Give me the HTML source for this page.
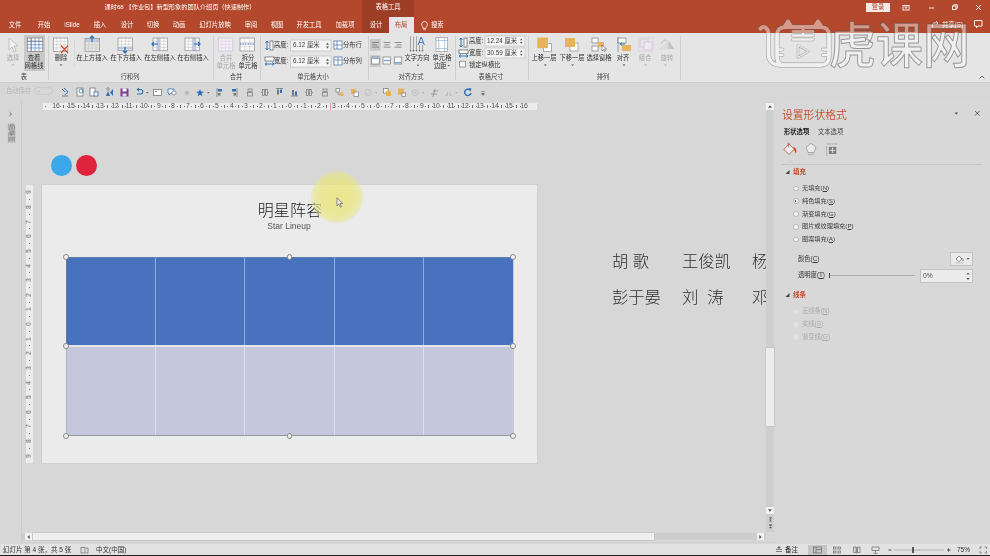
<!DOCTYPE html>
<html lang="zh"><head><meta charset="utf-8"><title>PowerPoint</title>
<style>
html,body{margin:0;padding:0}
body{width:990px;height:556px;overflow:hidden;position:relative;background:#d7d7d7;font-family:"Liberation Sans","Noto Sans CJK SC",sans-serif;color:#333;font-size:6.3px;line-height:1}
.a{position:absolute}
.t{position:absolute;white-space:nowrap;line-height:1}
.c{transform:translateX(-50%);text-align:center}
.w{color:#fff}
.t,.bl,.gl,svg{will-change:transform}
#top{left:0;top:0;width:990px;height:33px;background:#b4482d}
#ctx{left:362px;top:0;width:52px;height:33px;background:#9d3e27}
#tabact{left:389px;top:17px;width:25px;height:16px;background:#e5e5e5}
#rib{left:0;top:33px;width:990px;height:49px;background:#e5e5e5}
#qat{left:0;top:82px;width:990px;height:19px;background:#d7d7d7;border-top:1px solid #cdcdcd;box-sizing:border-box}
.sep{position:absolute;top:36px;width:1px;height:44px;background:#cfcfcf}
.gl{position:absolute;top:73.8px;font-size:6.3px;color:#444;white-space:nowrap;transform:translateX(-50%)}
.bl{position:absolute;font-size:6.3px;color:#333;white-space:nowrap;transform:translateX(-50%);text-align:center;line-height:7.8px}
.dis{color:#a8a8a8}
#status{left:0;top:544px;width:990px;height:12px;background:#e2e2e2}
#pane{left:777px;top:101px;width:213px;height:443px;background:#d8d8d8}
.ro{position:absolute;width:5.500px;height:5.500px;border:.8px solid #b4b4b4;border-radius:50%;background:#f4f4f4;box-sizing:border-box}
.h{position:absolute;width:5.800px;height:5.800px;border:.9px solid #858585;border-radius:50%;background:#f1f1ef;box-sizing:border-box}
</style></head><body>

<div class="a" id="top"></div><div class="a" id="ctx"></div><div class="a" id="tabact"></div>
<div class="t w c" style="left:179.500px;top:4px;font-size:6.200px">课时68 【作业包】新型形象的团队介绍页（快速制作）</div>
<div class="t w c" style="left:388px;top:4px;font-size:6.3px">表格工具</div>
<div class="t w c" style="left:14.7px;top:21.5px;font-size:6.3px">文件</div>
<div class="t w c" style="left:43.7px;top:21.5px;font-size:6.3px">开始</div>
<div class="t w c" style="left:71.7px;top:21.5px;font-size:6.3px">iSlide</div>
<div class="t w c" style="left:99.7px;top:21.5px;font-size:6.3px">插入</div>
<div class="t w c" style="left:126.7px;top:21.5px;font-size:6.3px">设计</div>
<div class="t w c" style="left:152.7px;top:21.5px;font-size:6.3px">切换</div>
<div class="t w c" style="left:178.7px;top:21.5px;font-size:6.3px">动画</div>
<div class="t w c" style="left:214.7px;top:21.5px;font-size:6.3px">幻灯片放映</div>
<div class="t w c" style="left:250.7px;top:21.5px;font-size:6.3px">审阅</div>
<div class="t w c" style="left:276.7px;top:21.5px;font-size:6.3px">视图</div>
<div class="t w c" style="left:308.7px;top:21.5px;font-size:6.3px">开发工具</div>
<div class="t w c" style="left:344.7px;top:21.5px;font-size:6.3px">加载项</div>
<div class="t w c" style="left:375.7px;top:21.5px;font-size:6.3px">设计</div>
<div class="t c" style="left:401.300px;top:21.500px;font-size:6.3px;color:#b4482d">布局</div>
<div class="t w" style="left:430.500px;top:21.500px;font-size:6.3px">搜索</div>
<svg class="a" style="left:420.300px;top:19.500px" width="9" height="12" viewBox="0 0 9 12"><path d="M4.500 1.500a2.900 2.900 0 0 0-1.600 5.300l.3 1.700h2.600l.3-1.700a2.900 2.900 0 0 0-1.600-5.300zM3.400 9.800h2.200" fill="none" stroke="#fff" stroke-width="0.8"/></svg>
<div class="a" style="left:866px;top:3px;width:24px;height:9px;background:#f3ebe8"></div><div class="t c" style="left:878px;top:4px;font-size:6.3px;color:#b4482d">登录</div>
<svg class="a" style="left:896px;top:0" width="94" height="33" viewBox="0 0 94 33"><g fill="none" stroke="#fff" stroke-width="0.9"><rect x="7" y="5.5" width="6" height="4.5"/><path d="M8.5 7h3M10 7v2"/><path d="M33 8h5"/><rect x="56.500" y="6" width="3.500" height="3.500"/><path d="M57.800 6v-1.200h3.500v3.500h-1.300"/><path d="M80 5l5 5M85 5l-5 5"/><path d="M78.500 20.500h7.500v5.500h-4l-1.500 1.800v-1.800h-2z"/><path d="M36.500 27.500v-2.500c0-1.200 1-2 2-2h2M40 24.700l2-1.700-2-1.700" transform="translate(0 0)"/><path d="M35.500 24.500v3.500h6" opacity=".0"/></g></svg>
<div class="t w" style="left:942px;top:21.500px;font-size:6.3px">共享(S)</div>
<div class="a" id="rib"></div><div class="a" id="qat"></div>
<div class="a" style="left:24px;top:35px;width:21px;height:36px;background:#c9c9c9"></div>
<div class="a" style="left:73.500px;top:39px;width:1px;height:27px;background:#d6d6d6"></div>
<div class="sep" style="left:47.5px"></div>
<div class="sep" style="left:213px"></div>
<div class="sep" style="left:260px"></div>
<div class="sep" style="left:367.5px"></div>
<div class="sep" style="left:455px"></div>
<div class="sep" style="left:528px"></div>
<div class="sep" style="left:680px"></div>
<div class="gl" style="left:24px">表</div>
<div class="gl" style="left:130px">行和列</div>
<div class="gl" style="left:236px">合并</div>
<div class="gl" style="left:313px">单元格大小</div>
<div class="gl" style="left:411px">对齐方式</div>
<div class="gl" style="left:491.3px">表格尺寸</div>
<div class="gl" style="left:603px">排列</div>
<div class="bl dis" style="left:13px;top:54px">选择</div>
<div class="bl" style="left:34px;top:54px">查看<br>网格线</div>
<div class="bl" style="left:61px;top:54px">删除</div>
<div class="bl" style="left:92px;top:54px">在上方插入</div>
<div class="bl" style="left:126px;top:54px">在下方插入</div>
<div class="bl" style="left:160px;top:54px">在左侧插入</div>
<div class="bl" style="left:193px;top:54px">在右侧插入</div>
<div class="bl dis" style="left:225.7px;top:54px">合并<br>单元格</div>
<div class="bl" style="left:247.5px;top:54px">拆分<br>单元格</div>
<div class="bl" style="left:417px;top:54px">文字方向</div>
<div class="bl" style="left:441.5px;top:54px">单元格<br>边距&nbsp;&nbsp;</div>
<div class="bl" style="left:544px;top:54px">上移一层</div>
<div class="bl" style="left:571.5px;top:54px">下移一层</div>
<div class="bl" style="left:599px;top:54px">选择窗格</div>
<div class="bl" style="left:623px;top:54px">对齐</div>
<div class="bl dis" style="left:645px;top:54px">组合</div>
<div class="bl dis" style="left:666.5px;top:54px">旋转</div><svg class="a" style="left:0;top:33px" width="700" height="49" viewBox="0 0 700 49">
<path d="M9 5l0 12 3-3 2 5 2-1-2-5h4z" fill="#f2f2f2" stroke="#b5b5b5" stroke-width="0.8"/>
<rect x="27.3" y="5" width="15.5" height="13.3" fill="#fff" stroke="#777" stroke-width="0.7"/><path d="M31.18 5v13.3M27.3 8.32h15.5M35.05 5v13.3M27.3 11.65h15.5M38.92 5v13.3M27.3 14.98h15.5" stroke="#5f90d6" stroke-width="0.8" fill="none"/>
<path d="M27.300 8.300h15.500M31.200 5v13.300" stroke="#777" stroke-width="0.7" fill="none"/>
<rect x="53.3" y="5" width="14.5" height="13.3" fill="#fbfbfb" stroke="#8c8c8c" stroke-width="0.7"/><path d="M56.92 5v13.3M53.3 8.32h14.5M60.55 5v13.3M53.3 11.65h14.5M64.17 5v13.3M53.3 14.98h14.5" stroke="#c4c4c4" stroke-width="0.55" fill="none"/>
<path d="M61 12.500l7 7.500M68 12.500l-7 7.500" stroke="#d8472b" stroke-width="1.200"/>
<rect x="85" y="5.600" width="14.500" height="3.300" fill="#b9cbe6"/>
<rect x="85" y="5.6" width="14.5" height="12.7" fill="none" stroke="#8c8c8c" stroke-width="0.7"/><path d="M88.62 5.6v12.7M85 8.77h14.5M92.25 5.6v12.7M85 11.95h14.5M95.88 5.6v12.7M85 15.12h14.5" stroke="#c4c4c4" stroke-width="0.55" fill="none"/>
<rect x="85" y="6" width="0" height="0" fill="#b9cbe6"/><path d="M92 9V3M90 5l2-2 2 2" stroke="#2e6fb5" stroke-width="1.2" fill="none"/>
<rect x="118" y="5" width="14.500" height="12.700" fill="#fbfbfb"/><rect x="118" y="13.500" width="14.500" height="3" fill="#b9cbe6"/>
<rect x="118" y="5" width="14.5" height="12.7" fill="none" stroke="#8c8c8c" stroke-width="0.7"/><path d="M121.62 5v12.7M118 8.18h14.5M125.25 5v12.7M118 11.35h14.5M128.88 5v12.7M118 14.52h14.5" stroke="#c4c4c4" stroke-width="0.55" fill="none"/>
<rect x="118" y="13" width="0" height="0" fill="#b9cbe6"/><path d="M125 14v6M123 18l2 2 2-2" stroke="#2e6fb5" stroke-width="1.2" fill="none"/>
<rect x="153" y="5" width="14.500" height="12.700" fill="#fbfbfb"/><rect x="156.600" y="5" width="3.700" height="12.700" fill="#b9cbe6"/>
<rect x="153" y="5" width="14.5" height="12.7" fill="none" stroke="#8c8c8c" stroke-width="0.7"/><path d="M156.62 5v12.7M153 8.18h14.5M160.25 5v12.7M153 11.35h14.5M163.88 5v12.7M153 14.52h14.5" stroke="#c4c4c4" stroke-width="0.55" fill="none"/>
<rect x="153" y="5" width="0" height="0" fill="#b9cbe6"/><path d="M158 11h-6M154 9l-2 2 2 2" stroke="#2e6fb5" stroke-width="1.2" fill="none"/>
<rect x="185" y="5" width="14.500" height="12.700" fill="#fbfbfb"/><rect x="192.300" y="5" width="3.700" height="12.700" fill="#b9cbe6"/>
<rect x="185" y="5" width="14.5" height="12.7" fill="none" stroke="#8c8c8c" stroke-width="0.7"/><path d="M188.62 5v12.7M185 8.18h14.5M192.25 5v12.7M185 11.35h14.5M195.88 5v12.7M185 14.52h14.5" stroke="#c4c4c4" stroke-width="0.55" fill="none"/>
<rect x="194.500" y="5" width="0" height="0" fill="#b9cbe6"/><path d="M194 11h6M198 9l2 2-2 2" stroke="#2e6fb5" stroke-width="1.2" fill="none"/>
<rect x="218.3" y="5" width="14.5" height="13" fill="#f3eef5" stroke="#cdbdd4" stroke-width="0.7"/><path d="M221.93 5v13M218.3 8.25h14.5M225.55 5v13M218.3 11.50h14.5M229.18 5v13M218.3 14.75h14.5" stroke="#dccfe2" stroke-width="0.55" fill="none"/>
<rect x="240" y="5" width="14.5" height="13" fill="#fbfbfb" stroke="#8c8c8c" stroke-width="0.7"/><path d="M244.83 5v13M240 9.33h14.5M249.67 5v13M240 13.67h14.5" stroke="#c4c4c4" stroke-width="0.55" fill="none"/>
<path d="M240 11h14" stroke="#2e6fb5" stroke-width="1.2" stroke-dasharray="1.500 1"/>
<path d="M267 8v9M265.500 10l1.500-2 1.500 2M265.500 15l1.500 2 1.500-2" stroke="#2e6fb5" stroke-width="0.9" fill="none"/><rect x="270" y="8" width="3" height="9" fill="#fff" stroke="#6e6e6e" stroke-width="0.8"/>
<rect x="265" y="24" width="9" height="4" fill="#fff" stroke="#6e6e6e" stroke-width="0.8"/><path d="M265 31h9M267 29.500l-2 1.500 2 1.500M272 29.500l2 1.500-2 1.500" stroke="#2e6fb5" stroke-width="0.9" fill="none"/>
<rect x="290.5" y="7" width="40.500" height="11" fill="#f5f5f5" stroke="#c6c6c6" stroke-width="0.8"/><path d="M326 11.7l1.500-2 1.500 2zM326 13.5l1.500 2 1.500-2z" fill="#555"/>
<rect x="290.5" y="23" width="40.500" height="11" fill="#f5f5f5" stroke="#c6c6c6" stroke-width="0.8"/><path d="M326 27.7l1.500-2 1.500 2zM326 29.5l1.500 2 1.500-2z" fill="#555"/>
<rect x="334" y="8" width="8" height="8" fill="#fff" stroke="#5b7fb5" stroke-width="0.8"/><path d="M334 12h8M337 8v8" stroke="#5b7fb5" stroke-width="0.8"/>
<rect x="334" y="24" width="8" height="8" fill="#fff" stroke="#5b7fb5" stroke-width="0.8"/><path d="M334 27h8M338 24v8" stroke="#5b7fb5" stroke-width="0.8"/>
<rect x="370" y="6" width="10.700" height="11.700" fill="#c8c8c8"/>
<path d="M372 9.500h7M372 11.800h5M372 14.100h7" stroke="#777" stroke-width="0.8"/>
<path d="M383.5 9.500h7M384.5 11.800h5M383.5 14.100h7" stroke="#777" stroke-width="0.8"/>
<path d="M394.5 9.500h7M396.5 11.800h5M394.5 14.100h7" stroke="#777" stroke-width="0.8"/>
<rect x="370" y="22.200" width="10.700" height="11.700" fill="#c8c8c8"/>
<rect x="371.7" y="24" width="7.500" height="7" fill="#fff" stroke="#777" stroke-width="0.7"/><path d="M372.3 25.3h6.300" stroke="#7fa6d9" stroke-width="1.600"/>
<rect x="383" y="24" width="7.500" height="7" fill="#fff" stroke="#777" stroke-width="0.7"/><path d="M383.6 27.5h6.300" stroke="#7fa6d9" stroke-width="1.600"/>
<rect x="394.3" y="24" width="7.500" height="7" fill="#fff" stroke="#777" stroke-width="0.7"/><path d="M394.90000000000003 29.700000000000003h6.300" stroke="#7fa6d9" stroke-width="1.600"/>
<path d="M410.500 3.500v15M413.500 3.500v15M416.500 3.500v15M419.500 12v6.500M422.500 12v6.500" stroke="#8a8a8a" stroke-width="0.7" fill="none"/>
<path d="M409.500 17l1 1.800 1-1.800zM412.500 17l1 1.800 1-1.800zM415.500 17l1 1.800 1-1.800zM418.500 17l1 1.800 1-1.800zM421.500 17l1 1.800 1-1.800z" fill="#666"/>
<text x="417.500" y="11.600" font-size="11" font-family="Liberation Sans,sans-serif" fill="#4a7fc0">A</text>
<path d="M416.700 31.700l1.300 1.500 1.300-1.500z" fill="#555"/>
<rect x="436" y="4.500" width="11.500" height="14" fill="#fff" stroke="#9a9a9a" stroke-width="0.7"/><path d="M438.800 4.500v14M444.700 4.500v14M436 7.500h11.500M436 15.500h11.500" stroke="#8fb4e0" stroke-width="0.7"/>
<path d="M447.500 32l1.200 1.400 1.200-1.400z" fill="#555"/>
<path d="M461 5v9M459.500 7l1.500-2 1.500 2M459.500 12l1.500 2 1.500-2" stroke="#2e6fb5" stroke-width="0.9" fill="none"/><rect x="464" y="5" width="3" height="9" fill="#fff" stroke="#6e6e6e" stroke-width="0.8"/>
<rect x="459" y="17" width="9" height="3.500" fill="#fff" stroke="#6e6e6e" stroke-width="0.8"/><path d="M459 23h9M461 21.500l-2 1.500 2 1.500M466 21.500l2 1.500-2 1.500" stroke="#2e6fb5" stroke-width="0.9" fill="none"/>
<rect x="485" y="3" width="40" height="10" fill="#f5f5f5" stroke="#c6c6c6" stroke-width="0.8"/><path d="M520 7.3l1.300-1.800 1.300 1.800zM520 9l1.300 1.800 1.300-1.800z" fill="#555"/>
<rect x="485" y="15" width="40" height="10" fill="#f5f5f5" stroke="#c6c6c6" stroke-width="0.8"/><path d="M520 19.3l1.300-1.800 1.300 1.800zM520 21l1.300 1.800 1.300-1.800z" fill="#555"/>
<rect x="459.700" y="28.200" width="5.800" height="5.800" fill="#f6f6f6" stroke="#777" stroke-width="0.7"/>
<rect x="543.500" y="10.500" width="8" height="8" fill="#fff" stroke="#9a9a9a" stroke-width="0.8"/><rect x="537.300" y="4.500" width="10.700" height="10.700" fill="#e8b45b"/>
<rect x="570" y="10" width="8" height="8" fill="#fff" stroke="#9a9a9a" stroke-width="0.8"/><rect x="565" y="5" width="10" height="9" fill="#e8b45b"/>
<rect x="592" y="5" width="6" height="5" fill="#fff" stroke="#8a8a8a" stroke-width="0.8"/><rect x="592" y="13" width="6" height="5" fill="#fff" stroke="#8a8a8a" stroke-width="0.8"/><rect x="598" y="9" width="6" height="5" fill="#e8b45b"/><path d="M602 12v6l1.500-1.500 1 2 1-.5-1-2h2z" fill="#fff" stroke="#555" stroke-width="0.6"/>
<rect x="618" y="5" width="8" height="5" fill="#fff" stroke="#8a8a8a" stroke-width="0.8"/><rect x="622" y="12" width="9" height="6" fill="#e8b45b"/><path d="M618 4v15" stroke="#8a8a8a" stroke-width="0.8"/><path d="M625 11h-5M622 9.500l-2 1.500 2 1.500" stroke="#2e6fb5" stroke-width="0.9" fill="none"/>
<g stroke="#d3c3d8" fill="none" stroke-width="0.8"><rect x="640" y="6" width="8" height="8"/><rect x="644" y="9" width="8" height="8" fill="#efe8f1"/><rect x="638.500" y="4.500" width="15" height="14" stroke-dasharray="1 1"/></g>
<path d="M668.300 6.900l6.100 9.200h-6.100z" fill="#c4c4c4"/><path d="M659.700 16.100l8-7.800v7.800z" fill="#dedede" stroke="#cfcfcf" stroke-width="0.5"/><path d="M661.600 11c.5-2.200 2-3.600 4-3.900M664.600 5.800l1.600 1.200-1.300 1.500" stroke="#bdbdbd" fill="none" stroke-width="0.9"/>
<path d="M11.5 31.500l1.500 1.500 1.500-1.500z" fill="#aaa"/>
<path d="M59.5 31.500l1.500 1.500 1.500-1.500z" fill="#555"/>
<path d="M543.8 31.500l1.500 1.500 1.500-1.500z" fill="#555"/>
<path d="M571.0 31.500l1.500 1.500 1.500-1.500z" fill="#555"/>
<path d="M622.5 31.500l1.500 1.500 1.500-1.500z" fill="#555"/>
<path d="M644.0 31.500l1.500 1.500 1.500-1.500z" fill="#aaa"/>
<path d="M664.0 31.500l1.500 1.500 1.500-1.500z" fill="#aaa"/>
</svg>
<div class="t" style="left:274px;top:42px;font-size:6.3px;color:#333">高度:</div>
<div class="t" style="left:274px;top:58px;font-size:6.3px;color:#333">宽度:</div>
<div class="t" style="left:343px;top:42px;font-size:6.3px;color:#333">分布行</div>
<div class="t" style="left:343px;top:58px;font-size:6.3px;color:#333">分布列</div>
<div class="t" style="left:469px;top:37.5px;font-size:6.3px;color:#333">高度:</div>
<div class="t" style="left:469px;top:49.5px;font-size:6.3px;color:#333">宽度:</div>
<div class="t" style="left:468.5px;top:61.8px;font-size:6.3px;color:#333">锁定纵横比</div>
<div class="t" style="left:293px;top:42px;font-size:6.3px;color:#444">6.12 厘米</div>
<div class="t" style="left:293px;top:58px;font-size:6.3px;color:#444">6.12 厘米</div>
<div class="t" style="left:487px;top:37.5px;font-size:6.3px;color:#444">12.24 厘米</div>
<div class="t" style="left:487px;top:49.5px;font-size:6.3px;color:#444">30.59 厘米</div>
<svg class="a" style="left:978px;top:74px" width="8" height="6"><path d="M1.500 4.500l2.500-2.500 2.500 2.500" stroke="#555" fill="none" stroke-width="0.9"/></svg><div class="t" style="left:5.500px;top:88px;font-size:6.3px;color:#b8b8b8">自动保存</div>
<div class="a" style="left:33.500px;top:87px;width:19px;height:8px;border:1px solid #cbcbcb;border-radius:4px;box-sizing:border-box"></div><div class="a" style="left:36.500px;top:89.500px;width:3px;height:3px;border-radius:50%;background:#cbcbcb"></div>
<svg class="a" style="left:55px;top:82.800px" width="440" height="19" viewBox="55 0 440 19">
<path d="M62 6l3 3M64 5l4 4-3 3" stroke="#2e6fb5" stroke-width="1" fill="none"/><path d="M62 13h6" stroke="#777" stroke-width="1"/>
<rect x="77" y="5" width="6" height="8" fill="#fff" stroke="#777" stroke-width="0.8"/><circle cx="81" cy="8" r="2" fill="none" stroke="#2e6fb5" stroke-width="0.8"/>
<rect x="90" y="5" width="5" height="8" fill="#fff" stroke="#777" stroke-width="0.8"/><rect x="94" y="9" width="4" height="4" fill="#fff" stroke="#2e6fb5" stroke-width="0.8"/>
<path d="M106 13l2-5 2 5zM113 6v7l-3-3.500z" fill="#2e6fb5"/><circle cx="108" cy="6" r="1.300" fill="none" stroke="#777" stroke-width="0.7"/>
<rect x="120.500" y="5.500" width="8" height="8" fill="#7a3f98"/><rect x="122.500" y="5.500" width="4" height="3" fill="#fff"/><rect x="122.500" y="10.500" width="4" height="3" fill="#e6dcee"/>
<path d="M137 11h4a2.300 2.300 0 0 0 0-4.500h-3" stroke="#2e6fb5" stroke-width="1.200" fill="none"/><path d="M139 4.500l-2.500 2 2.500 2z" fill="#2e6fb5"/><path d="M146 9l1.300 1.500 1.300-1.500z" fill="#666"/>
<rect x="153.500" y="6.500" width="8" height="6" fill="#fff" stroke="#777" stroke-width="0.8"/><path d="M155 8.500h2" stroke="#2e6fb5" stroke-width="0.8"/>
<path d="M168 6h6v4h-3l-2 2v-2h-1z" fill="#fff" stroke="#2e6fb5" stroke-width="0.8"/><circle cx="174" cy="10" r="2" fill="#fff" stroke="#777" stroke-width="0.7"/>
<polygon points="187.0,6.5 187.9,8.8 190.3,8.9 188.4,10.5 189.1,12.8 187.0,11.5 184.9,12.8 185.6,10.5 183.7,8.9 186.1,8.8" fill="#b9b9b9"/>
<polygon points="200.0,6.0 201.0,8.6 203.8,8.8 201.6,10.5 202.4,13.2 200.0,11.7 197.6,13.2 198.4,10.5 196.2,8.8 199.0,8.6" fill="#2e6fb5"/>
<path d="M207 9l1.300 1.500 1.300-1.500z" fill="#666"/>
<path d="M217 5v9" stroke="#777" stroke-width="0.8"/><rect x="218" y="6" width="4" height="2.500" fill="#2e6fb5"/><rect x="218" y="10" width="2.500" height="2.500" fill="#777"/>
<path d="M237 5v9" stroke="#777" stroke-width="0.8"/><rect x="232" y="6" width="4" height="2.500" fill="#2e6fb5"/><rect x="233.5" y="10" width="2.500" height="2.500" fill="#777"/>
<rect x="248" y="6" width="4" height="2.500" fill="none" stroke="#777" stroke-width="0.7"/><rect x="247.5" y="9.500" width="5" height="3.500" fill="none" stroke="#777" stroke-width="0.7"/>
<rect x="262.5" y="6.500" width="2" height="6" fill="none" stroke="#777" stroke-width="0.7"/><rect x="265.5" y="6.500" width="2" height="6" fill="none" stroke="#777" stroke-width="0.7"/><path d="M261 9.500h1M268 9.500h1" stroke="#777" stroke-width="0.7"/>
<path d="M276 5.500h7" stroke="#777" stroke-width="0.8"/><rect x="277" y="6.500" width="2" height="5" fill="#777"/><rect x="280" y="6.500" width="2" height="3.500" fill="#2e6fb5"/>
<path d="M291 13h7" stroke="#777" stroke-width="0.8"/><rect x="292" y="7" width="2" height="5.500" fill="#777"/><rect x="295" y="8.500" width="2" height="4" fill="#2e6fb5"/>
<rect x="306.5" y="6.500" width="2" height="6" fill="none" stroke="#777" stroke-width="0.7"/><rect x="309.5" y="6.500" width="2" height="6" fill="none" stroke="#777" stroke-width="0.7"/><path d="M305 9.500h1M312 9.500h1" stroke="#777" stroke-width="0.7"/>
<rect x="323" y="6" width="4" height="2.500" fill="none" stroke="#777" stroke-width="0.7"/><rect x="322.5" y="9.500" width="5" height="3.500" fill="none" stroke="#777" stroke-width="0.7"/>
<rect x="336" y="5.500" width="3.500" height="3.500" fill="#fff" stroke="#777" stroke-width="0.7"/><rect x="340" y="9.500" width="3.500" height="3.500" fill="#e9b05a"/><path d="M338 9v2.500h2" stroke="#777" stroke-width="0.6" fill="none"/>
<rect x="351" y="6" width="5" height="5" fill="#e9b05a"/><rect x="354" y="9" width="4.500" height="4.500" fill="#fff" stroke="#777" stroke-width="0.7"/>
<circle cx="368" cy="9.500" r="3.200" fill="none" stroke="#bdbdbd" stroke-width="0.8"/><path d="M366 12l4-5" stroke="#bdbdbd" stroke-width="0.8"/><path d="M375 9l1.200 1.400 1.200-1.400z" fill="#aaa"/>
<rect x="383.500" y="5.500" width="4.500" height="4.500" fill="#fff" stroke="#777" stroke-width="0.7"/><rect x="386" y="8" width="5" height="5" fill="#e9b05a"/>
<rect x="398" y="5.500" width="6" height="6" fill="#e9b05a"/><rect x="402" y="10" width="3.500" height="3.500" fill="#fff" stroke="#777" stroke-width="0.7"/>
<circle cx="415" cy="9.500" r="3" fill="none" stroke="#bdbdbd" stroke-width="0.8"/><circle cx="415" cy="9.500" r="1" fill="#bdbdbd"/><path d="M422 9l1.200 1.400 1.200-1.400z" fill="#aaa"/>
<path d="M431 11h6M435 6l-2 8M433 8h5" stroke="#8f8f8f" stroke-width="0.8" fill="none"/>
<path d="M445 13l3-5v5zM449.500 8l2.500 5h-2.500z" fill="#bdbdbd"/><path d="M455 9l1.200 1.400 1.200-1.400z" fill="#aaa"/>
<path d="M470 7a3.200 3.200 0 1 0 1 3" stroke="#2e6fb5" stroke-width="1.400" fill="none"/><path d="M468.500 5l3 .5-1 3z" fill="#2e6fb5"/>
<path d="M481.500 8.500h3M481.500 10.500l1.500 1.800 1.500-1.800z" stroke="#666" stroke-width="0.7" fill="#666"/>
</svg>
<div class="a" style="left:42.500px;top:103px;width:494.500px;height:7.200px;background:#ececec"></div>
<div class="t c" style="left:56.2px;top:103.300px;font-size:6.800px;color:#505050">16</div>
<div class="a" style="left:63.0px;top:105.200px;width:1px;height:3px;background:#707070"></div>
<div class="a" style="left:59.9px;top:106.200px;width:1px;height:1px;background:#888"></div><div class="a" style="left:66.7px;top:106.200px;width:1px;height:1px;background:#777"></div>
<div class="t c" style="left:70.9px;top:103.300px;font-size:6.800px;color:#505050">15</div>
<div class="a" style="left:77.7px;top:105.200px;width:1px;height:3px;background:#707070"></div>
<div class="a" style="left:74.5px;top:106.200px;width:1px;height:1px;background:#888"></div><div class="a" style="left:81.3px;top:106.200px;width:1px;height:1px;background:#777"></div>
<div class="t c" style="left:85.5px;top:103.300px;font-size:6.800px;color:#505050">14</div>
<div class="a" style="left:92.3px;top:105.200px;width:1px;height:3px;background:#707070"></div>
<div class="a" style="left:89.1px;top:106.200px;width:1px;height:1px;background:#888"></div><div class="a" style="left:95.9px;top:106.200px;width:1px;height:1px;background:#777"></div>
<div class="t c" style="left:100.1px;top:103.300px;font-size:6.800px;color:#505050">13</div>
<div class="a" style="left:106.9px;top:105.200px;width:1px;height:3px;background:#707070"></div>
<div class="a" style="left:103.7px;top:106.200px;width:1px;height:1px;background:#888"></div><div class="a" style="left:110.5px;top:106.200px;width:1px;height:1px;background:#777"></div>
<div class="t c" style="left:114.7px;top:103.300px;font-size:6.800px;color:#505050">12</div>
<div class="a" style="left:121.5px;top:105.200px;width:1px;height:3px;background:#707070"></div>
<div class="a" style="left:118.3px;top:106.200px;width:1px;height:1px;background:#888"></div><div class="a" style="left:125.1px;top:106.200px;width:1px;height:1px;background:#777"></div>
<div class="t c" style="left:129.3px;top:103.300px;font-size:6.800px;color:#505050">11</div>
<div class="a" style="left:136.1px;top:105.200px;width:1px;height:3px;background:#707070"></div>
<div class="a" style="left:132.9px;top:106.200px;width:1px;height:1px;background:#888"></div><div class="a" style="left:139.7px;top:106.200px;width:1px;height:1px;background:#777"></div>
<div class="t c" style="left:143.9px;top:103.300px;font-size:6.800px;color:#505050">10</div>
<div class="a" style="left:150.7px;top:105.200px;width:1px;height:3px;background:#707070"></div>
<div class="a" style="left:147.6px;top:106.200px;width:1px;height:1px;background:#888"></div><div class="a" style="left:154.4px;top:106.200px;width:1px;height:1px;background:#777"></div>
<div class="t c" style="left:158.5px;top:103.300px;font-size:6.800px;color:#505050">9</div>
<div class="a" style="left:165.3px;top:105.200px;width:1px;height:3px;background:#707070"></div>
<div class="a" style="left:162.2px;top:106.200px;width:1px;height:1px;background:#888"></div><div class="a" style="left:169.0px;top:106.200px;width:1px;height:1px;background:#777"></div>
<div class="t c" style="left:173.1px;top:103.300px;font-size:6.800px;color:#505050">8</div>
<div class="a" style="left:179.9px;top:105.200px;width:1px;height:3px;background:#707070"></div>
<div class="a" style="left:176.8px;top:106.200px;width:1px;height:1px;background:#888"></div><div class="a" style="left:183.6px;top:106.200px;width:1px;height:1px;background:#777"></div>
<div class="t c" style="left:187.7px;top:103.300px;font-size:6.800px;color:#505050">7</div>
<div class="a" style="left:194.5px;top:105.200px;width:1px;height:3px;background:#707070"></div>
<div class="a" style="left:191.4px;top:106.200px;width:1px;height:1px;background:#888"></div><div class="a" style="left:198.2px;top:106.200px;width:1px;height:1px;background:#777"></div>
<div class="t c" style="left:202.3px;top:103.300px;font-size:6.800px;color:#505050">6</div>
<div class="a" style="left:209.1px;top:105.200px;width:1px;height:3px;background:#707070"></div>
<div class="a" style="left:206.0px;top:106.200px;width:1px;height:1px;background:#888"></div><div class="a" style="left:212.8px;top:106.200px;width:1px;height:1px;background:#777"></div>
<div class="t c" style="left:216.9px;top:103.300px;font-size:6.800px;color:#505050">5</div>
<div class="a" style="left:223.8px;top:105.200px;width:1px;height:3px;background:#707070"></div>
<div class="a" style="left:220.6px;top:106.200px;width:1px;height:1px;background:#888"></div><div class="a" style="left:227.4px;top:106.200px;width:1px;height:1px;background:#777"></div>
<div class="t c" style="left:231.6px;top:103.300px;font-size:6.800px;color:#505050">4</div>
<div class="a" style="left:238.4px;top:105.200px;width:1px;height:3px;background:#707070"></div>
<div class="a" style="left:235.2px;top:106.200px;width:1px;height:1px;background:#888"></div><div class="a" style="left:242.0px;top:106.200px;width:1px;height:1px;background:#777"></div>
<div class="t c" style="left:246.2px;top:103.300px;font-size:6.800px;color:#505050">3</div>
<div class="a" style="left:253.0px;top:105.200px;width:1px;height:3px;background:#707070"></div>
<div class="a" style="left:249.8px;top:106.200px;width:1px;height:1px;background:#888"></div><div class="a" style="left:256.6px;top:106.200px;width:1px;height:1px;background:#777"></div>
<div class="t c" style="left:260.8px;top:103.300px;font-size:6.800px;color:#505050">2</div>
<div class="a" style="left:267.6px;top:105.200px;width:1px;height:3px;background:#707070"></div>
<div class="a" style="left:264.4px;top:106.200px;width:1px;height:1px;background:#888"></div><div class="a" style="left:271.2px;top:106.200px;width:1px;height:1px;background:#777"></div>
<div class="t c" style="left:275.4px;top:103.300px;font-size:6.800px;color:#505050">1</div>
<div class="a" style="left:282.2px;top:105.200px;width:1px;height:3px;background:#707070"></div>
<div class="a" style="left:279.0px;top:106.200px;width:1px;height:1px;background:#888"></div><div class="a" style="left:285.8px;top:106.200px;width:1px;height:1px;background:#777"></div>
<div class="t c" style="left:290.0px;top:103.300px;font-size:6.800px;color:#505050">0</div>
<div class="a" style="left:296.8px;top:105.200px;width:1px;height:3px;background:#707070"></div>
<div class="a" style="left:293.7px;top:106.200px;width:1px;height:1px;background:#888"></div><div class="a" style="left:300.5px;top:106.200px;width:1px;height:1px;background:#777"></div>
<div class="t c" style="left:304.6px;top:103.300px;font-size:6.800px;color:#505050">1</div>
<div class="a" style="left:311.4px;top:105.200px;width:1px;height:3px;background:#707070"></div>
<div class="a" style="left:308.3px;top:106.200px;width:1px;height:1px;background:#888"></div><div class="a" style="left:315.1px;top:106.200px;width:1px;height:1px;background:#777"></div>
<div class="t c" style="left:319.2px;top:103.300px;font-size:6.800px;color:#505050">2</div>
<div class="a" style="left:326.0px;top:105.200px;width:1px;height:3px;background:#707070"></div>
<div class="a" style="left:322.9px;top:106.200px;width:1px;height:1px;background:#888"></div><div class="a" style="left:329.7px;top:106.200px;width:1px;height:1px;background:#777"></div>
<div class="t c" style="left:333.8px;top:103.300px;font-size:6.800px;color:#505050">3</div>
<div class="a" style="left:340.6px;top:105.200px;width:1px;height:3px;background:#707070"></div>
<div class="a" style="left:337.5px;top:106.200px;width:1px;height:1px;background:#888"></div><div class="a" style="left:344.3px;top:106.200px;width:1px;height:1px;background:#777"></div>
<div class="t c" style="left:348.4px;top:103.300px;font-size:6.800px;color:#505050">4</div>
<div class="a" style="left:355.2px;top:105.200px;width:1px;height:3px;background:#707070"></div>
<div class="a" style="left:352.1px;top:106.200px;width:1px;height:1px;background:#888"></div><div class="a" style="left:358.9px;top:106.200px;width:1px;height:1px;background:#777"></div>
<div class="t c" style="left:363.1px;top:103.300px;font-size:6.800px;color:#505050">5</div>
<div class="a" style="left:369.9px;top:105.200px;width:1px;height:3px;background:#707070"></div>
<div class="a" style="left:366.7px;top:106.200px;width:1px;height:1px;background:#888"></div><div class="a" style="left:373.5px;top:106.200px;width:1px;height:1px;background:#777"></div>
<div class="t c" style="left:377.7px;top:103.300px;font-size:6.800px;color:#505050">6</div>
<div class="a" style="left:384.5px;top:105.200px;width:1px;height:3px;background:#707070"></div>
<div class="a" style="left:381.3px;top:106.200px;width:1px;height:1px;background:#888"></div><div class="a" style="left:388.1px;top:106.200px;width:1px;height:1px;background:#777"></div>
<div class="t c" style="left:392.3px;top:103.300px;font-size:6.800px;color:#505050">7</div>
<div class="a" style="left:399.1px;top:105.200px;width:1px;height:3px;background:#707070"></div>
<div class="a" style="left:395.9px;top:106.200px;width:1px;height:1px;background:#888"></div><div class="a" style="left:402.7px;top:106.200px;width:1px;height:1px;background:#777"></div>
<div class="t c" style="left:406.9px;top:103.300px;font-size:6.800px;color:#505050">8</div>
<div class="a" style="left:413.7px;top:105.200px;width:1px;height:3px;background:#707070"></div>
<div class="a" style="left:410.5px;top:106.200px;width:1px;height:1px;background:#888"></div><div class="a" style="left:417.3px;top:106.200px;width:1px;height:1px;background:#777"></div>
<div class="t c" style="left:421.5px;top:103.300px;font-size:6.800px;color:#505050">9</div>
<div class="a" style="left:428.3px;top:105.200px;width:1px;height:3px;background:#707070"></div>
<div class="a" style="left:425.1px;top:106.200px;width:1px;height:1px;background:#888"></div><div class="a" style="left:431.9px;top:106.200px;width:1px;height:1px;background:#777"></div>
<div class="t c" style="left:436.1px;top:103.300px;font-size:6.800px;color:#505050">10</div>
<div class="a" style="left:442.9px;top:105.200px;width:1px;height:3px;background:#707070"></div>
<div class="a" style="left:439.8px;top:106.200px;width:1px;height:1px;background:#888"></div><div class="a" style="left:446.6px;top:106.200px;width:1px;height:1px;background:#777"></div>
<div class="t c" style="left:450.7px;top:103.300px;font-size:6.800px;color:#505050">11</div>
<div class="a" style="left:457.5px;top:105.200px;width:1px;height:3px;background:#707070"></div>
<div class="a" style="left:454.4px;top:106.200px;width:1px;height:1px;background:#888"></div><div class="a" style="left:461.2px;top:106.200px;width:1px;height:1px;background:#777"></div>
<div class="t c" style="left:465.3px;top:103.300px;font-size:6.800px;color:#505050">12</div>
<div class="a" style="left:472.1px;top:105.200px;width:1px;height:3px;background:#707070"></div>
<div class="a" style="left:469.0px;top:106.200px;width:1px;height:1px;background:#888"></div><div class="a" style="left:475.8px;top:106.200px;width:1px;height:1px;background:#777"></div>
<div class="t c" style="left:479.9px;top:103.300px;font-size:6.800px;color:#505050">13</div>
<div class="a" style="left:486.7px;top:105.200px;width:1px;height:3px;background:#707070"></div>
<div class="a" style="left:483.6px;top:106.200px;width:1px;height:1px;background:#888"></div><div class="a" style="left:490.4px;top:106.200px;width:1px;height:1px;background:#777"></div>
<div class="t c" style="left:494.5px;top:103.300px;font-size:6.800px;color:#505050">14</div>
<div class="a" style="left:501.3px;top:105.200px;width:1px;height:3px;background:#707070"></div>
<div class="a" style="left:498.2px;top:106.200px;width:1px;height:1px;background:#888"></div><div class="a" style="left:505.0px;top:106.200px;width:1px;height:1px;background:#777"></div>
<div class="t c" style="left:509.1px;top:103.300px;font-size:6.800px;color:#505050">15</div>
<div class="a" style="left:516.0px;top:105.200px;width:1px;height:3px;background:#707070"></div>
<div class="a" style="left:512.8px;top:106.200px;width:1px;height:1px;background:#888"></div><div class="a" style="left:519.6px;top:106.200px;width:1px;height:1px;background:#777"></div>
<div class="t c" style="left:523.8px;top:103.300px;font-size:6.800px;color:#505050">16</div>
<div class="a" style="left:45px;top:106.200px;width:1px;height:1px;background:#888"></div>
<div class="a" style="left:330.300px;top:103px;width:.6px;height:7.200px;background:#e59a8c"></div>
<div class="a" style="left:26px;top:185px;width:6.500px;height:278px;background:#ececec"></div>
<div class="t" style="left:29.200px;top:192.3px;font-size:6.500px;color:#5a5a5a;transform:translate(-50%,-50%) rotate(-90deg)">9</div>
<div class="a" style="left:28.500px;top:199.1px;width:1.500px;height:1px;background:#777"></div>
<div class="t" style="left:29.200px;top:207.0px;font-size:6.500px;color:#5a5a5a;transform:translate(-50%,-50%) rotate(-90deg)">8</div>
<div class="a" style="left:28.500px;top:213.8px;width:1.500px;height:1px;background:#777"></div>
<div class="t" style="left:29.200px;top:221.6px;font-size:6.500px;color:#5a5a5a;transform:translate(-50%,-50%) rotate(-90deg)">7</div>
<div class="a" style="left:28.500px;top:228.4px;width:1.500px;height:1px;background:#777"></div>
<div class="t" style="left:29.200px;top:236.2px;font-size:6.500px;color:#5a5a5a;transform:translate(-50%,-50%) rotate(-90deg)">6</div>
<div class="a" style="left:28.500px;top:243.0px;width:1.500px;height:1px;background:#777"></div>
<div class="t" style="left:29.200px;top:250.8px;font-size:6.500px;color:#5a5a5a;transform:translate(-50%,-50%) rotate(-90deg)">5</div>
<div class="a" style="left:28.500px;top:257.7px;width:1.500px;height:1px;background:#777"></div>
<div class="t" style="left:29.200px;top:265.5px;font-size:6.500px;color:#5a5a5a;transform:translate(-50%,-50%) rotate(-90deg)">4</div>
<div class="a" style="left:28.500px;top:272.3px;width:1.500px;height:1px;background:#777"></div>
<div class="t" style="left:29.200px;top:280.1px;font-size:6.500px;color:#5a5a5a;transform:translate(-50%,-50%) rotate(-90deg)">3</div>
<div class="a" style="left:28.500px;top:286.9px;width:1.500px;height:1px;background:#777"></div>
<div class="t" style="left:29.200px;top:294.7px;font-size:6.500px;color:#5a5a5a;transform:translate(-50%,-50%) rotate(-90deg)">2</div>
<div class="a" style="left:28.500px;top:301.6px;width:1.500px;height:1px;background:#777"></div>
<div class="t" style="left:29.200px;top:309.4px;font-size:6.500px;color:#5a5a5a;transform:translate(-50%,-50%) rotate(-90deg)">1</div>
<div class="a" style="left:28.500px;top:316.2px;width:1.500px;height:1px;background:#777"></div>
<div class="t" style="left:29.200px;top:324.0px;font-size:6.500px;color:#5a5a5a;transform:translate(-50%,-50%) rotate(-90deg)">0</div>
<div class="a" style="left:28.500px;top:330.8px;width:1.500px;height:1px;background:#777"></div>
<div class="t" style="left:29.200px;top:338.6px;font-size:6.500px;color:#5a5a5a;transform:translate(-50%,-50%) rotate(-90deg)">1</div>
<div class="a" style="left:28.500px;top:345.4px;width:1.500px;height:1px;background:#777"></div>
<div class="t" style="left:29.200px;top:353.3px;font-size:6.500px;color:#5a5a5a;transform:translate(-50%,-50%) rotate(-90deg)">2</div>
<div class="a" style="left:28.500px;top:360.1px;width:1.500px;height:1px;background:#777"></div>
<div class="t" style="left:29.200px;top:367.9px;font-size:6.500px;color:#5a5a5a;transform:translate(-50%,-50%) rotate(-90deg)">3</div>
<div class="a" style="left:28.500px;top:374.7px;width:1.500px;height:1px;background:#777"></div>
<div class="t" style="left:29.200px;top:382.5px;font-size:6.500px;color:#5a5a5a;transform:translate(-50%,-50%) rotate(-90deg)">4</div>
<div class="a" style="left:28.500px;top:389.3px;width:1.500px;height:1px;background:#777"></div>
<div class="t" style="left:29.200px;top:397.1px;font-size:6.500px;color:#5a5a5a;transform:translate(-50%,-50%) rotate(-90deg)">5</div>
<div class="a" style="left:28.500px;top:404.0px;width:1.500px;height:1px;background:#777"></div>
<div class="t" style="left:29.200px;top:411.8px;font-size:6.500px;color:#5a5a5a;transform:translate(-50%,-50%) rotate(-90deg)">6</div>
<div class="a" style="left:28.500px;top:418.6px;width:1.500px;height:1px;background:#777"></div>
<div class="t" style="left:29.200px;top:426.4px;font-size:6.500px;color:#5a5a5a;transform:translate(-50%,-50%) rotate(-90deg)">7</div>
<div class="a" style="left:28.500px;top:433.2px;width:1.500px;height:1px;background:#777"></div>
<div class="t" style="left:29.200px;top:441.0px;font-size:6.500px;color:#5a5a5a;transform:translate(-50%,-50%) rotate(-90deg)">8</div>
<div class="a" style="left:28.500px;top:447.9px;width:1.500px;height:1px;background:#777"></div>
<div class="t" style="left:29.200px;top:455.7px;font-size:6.500px;color:#5a5a5a;transform:translate(-50%,-50%) rotate(-90deg)">9</div>
<div class="a" style="left:21px;top:101px;width:1px;height:443px;background:#cbcbcb"></div>
<svg class="a" style="left:7.500px;top:110.500px" width="6" height="6"><path d="M1.500 1.200l2 1.800-2 1.800" fill="none" stroke="#555" stroke-width="0.8"/></svg>
<div class="t" style="left:10.800px;top:133px;font-size:6.300px;color:#666;transform:translate(-50%,-50%) rotate(90deg)">缩略图</div>
<div class="a" style="left:51px;top:155px;width:21px;height:21px;border-radius:50%;background:#3aa8ea"></div>
<div class="a" style="left:76px;top:155px;width:21px;height:21px;border-radius:50%;background:#e0233d"></div>
<div class="a" style="left:42px;top:185px;width:495px;height:278px;background:#ebebeb;box-shadow:0 0 0 1px #d0d0d0"></div>
<div class="t c" style="left:290px;top:202.800px;font-size:16px;color:#222;font-weight:300;letter-spacing:.15px">明星阵容</div>
<div class="t c" style="left:289px;top:221.500px;font-size:8.500px;color:#555">Star Lineup</div>
<div class="a" style="left:311px;top:171px;width:52px;height:52px;border-radius:50%;background:radial-gradient(circle,rgba(233,230,115,.78) 0%,rgba(233,230,120,.72) 50%,rgba(233,231,150,.35) 78%,rgba(234,232,170,0) 98%)"></div>
<svg class="a" style="left:335.600px;top:196.600px" width="9" height="11.700" viewBox="0 0 10 13"><path d="M1 .8v9l2.200-2 1.600 3.600 1.400-.6-1.600-3.500h3z" fill="#e6e6da" stroke="#6a6a6a" stroke-width="0.8"/></svg>
<div class="a" style="left:66px;top:257px;width:447px;height:89px;background:#4872bd"></div>
<div class="a" style="left:66px;top:346px;width:447px;height:89.500px;background:#c5c7dc"></div>
<div class="a" style="left:154.9px;top:257px;width:1px;height:88px;background:#8fabe0"></div>
<div class="a" style="left:154.9px;top:347px;width:1px;height:88.500px;background:#dcdeee"></div>
<div class="a" style="left:244.3px;top:257px;width:1px;height:88px;background:#8fabe0"></div>
<div class="a" style="left:244.3px;top:347px;width:1px;height:88.500px;background:#dcdeee"></div>
<div class="a" style="left:333.7px;top:257px;width:1px;height:88px;background:#8fabe0"></div>
<div class="a" style="left:333.7px;top:347px;width:1px;height:88.500px;background:#dcdeee"></div>
<div class="a" style="left:423.1px;top:257px;width:1px;height:88px;background:#8fabe0"></div>
<div class="a" style="left:423.1px;top:347px;width:1px;height:88.500px;background:#dcdeee"></div>
<div class="a" style="left:66px;top:344.800px;width:447px;height:2.200px;background:#e2e5e8"></div>
<div class="a" style="left:65.500px;top:256.500px;width:448px;height:179.500px;border:1px solid rgba(140,140,140,.35);box-sizing:border-box"></div>
<div class="a" style="left:66px;top:435px;width:447px;height:1px;background:rgba(120,120,120,.45)"></div>
<div class="h" style="left:63.1px;top:254.1px"></div>
<div class="h" style="left:286.6px;top:254.1px"></div>
<div class="h" style="left:510.1px;top:254.1px"></div>
<div class="h" style="left:63.1px;top:343.1px"></div>
<div class="h" style="left:510.1px;top:343.1px"></div>
<div class="h" style="left:63.1px;top:432.8px"></div>
<div class="h" style="left:286.6px;top:432.8px"></div>
<div class="h" style="left:510.1px;top:432.8px"></div>
<div class="a" style="left:600px;top:245px;width:167px;height:70px;overflow:hidden">
<div class="t" style="left:12px;top:8.3px;font-size:16.300px;color:#2e2e2e;font-weight:300">胡 歌</div>
<div class="t" style="left:82px;top:8.3px;font-size:16.300px;color:#2e2e2e;font-weight:300">王俊凯</div>
<div class="t" style="left:152px;top:8.3px;font-size:16.300px;color:#2e2e2e;font-weight:300">杨洋</div>
<div class="t" style="left:12px;top:44px;font-size:16.300px;color:#2e2e2e;font-weight:300">彭于晏</div>
<div class="t" style="left:82px;top:44px;font-size:16.300px;color:#2e2e2e;font-weight:300">刘<span style="margin-left:4.500px"> </span>涛</div>
<div class="t" style="left:152px;top:44px;font-size:16.300px;color:#2e2e2e;font-weight:300">邓超</div>
</div><div class="a" style="left:765.500px;top:102px;width:8.800px;height:430px;background:#cecece"></div>
<div class="a" style="left:765.800px;top:102.500px;width:8px;height:7px;background:#f2f2f2"></div><svg class="a" style="left:765.800px;top:102.500px" width="8" height="7"><path d="M2 4.700l2-2.400 2 2.400z" fill="#555"/></svg>
<div class="a" style="left:765.800px;top:348px;width:8px;height:78px;background:#ededed;box-shadow:0 0 0 .5px #bcbcbc"></div>
<div class="a" style="left:765.800px;top:507px;width:8px;height:7px;background:#f2f2f2"></div><svg class="a" style="left:765.800px;top:507px" width="8" height="7"><path d="M2 2.300l2 2.400 2-2.400z" fill="#555"/></svg>
<svg class="a" style="left:766px;top:515px" width="9" height="16"><path d="M3 4.500l1.500-1.500 1.500 1.500zM3 6.500l1.500-1.500 1.500 1.500zM3 10l1.500 1.500 1.500-1.500zM3 12l1.500 1.500 1.500-1.500z" fill="#555"/><path d="M3 2.500h3M3 9.500h3" stroke="#555" stroke-width="0.6"/></svg>
<div class="a" style="left:22px;top:532.600px;width:744px;height:7.800px;background:#cdcdcd"></div><div class="a" style="left:22px;top:542px;width:753px;height:1px;background:#d1d1d1"></div>
<div class="a" style="left:24.500px;top:533px;width:7px;height:7px;background:#f2f2f2"></div><svg class="a" style="left:24.500px;top:532.500px" width="7" height="8"><path d="M4.700 2l-2.400 2 2.400 2z" fill="#555"/></svg>
<div class="a" style="left:32.500px;top:533px;width:621px;height:7px;background:#eeeeee;box-shadow:0 0 0 .5px #bcbcbc"></div>
<div class="a" style="left:757px;top:533px;width:7px;height:7px;background:#f2f2f2"></div><svg class="a" style="left:757px;top:532.500px" width="7" height="8"><path d="M2.300 2l2.400 2-2.400 2z" fill="#555"/></svg>
<div class="a" id="pane"></div>
<div class="t" style="left:781.500px;top:110.200px;font-size:10.800px;font-weight:350;color:#c8472b">设置形状格式</div>
<svg class="a" style="left:950px;top:108px" width="35" height="12"><path d="M4.500 4.500l1.800 2.200 1.800-2.200z" fill="#555"/><path d="M25 3l4.500 4.500M29.500 3l-4.500 4.500" stroke="#555" stroke-width="0.9"/></svg>
<div class="t" style="left:783.500px;top:128.500px;font-size:6.300px;color:#222;font-weight:bold">形状选项</div>
<div class="t" style="left:818px;top:128.500px;font-size:6.300px;color:#444">文本选项</div>
<svg class="a" style="left:781px;top:141px" width="62" height="24" viewBox="0 0 62 24">
<path d="M8 3l5.200 5.300-5.200 5.300-5-5.300z" fill="#efefef" stroke="#c8472b" stroke-width="0.8" stroke-linejoin="round"/><circle cx="7.500" cy="2.700" r="0.800" fill="none" stroke="#c8472b" stroke-width="0.6"/><path d="M7.500 3.500v2.700" stroke="#c8472b" stroke-width="0.7"/><path d="M12.400 5.700c1.900.7 3.100 2.300 3 4.500c0 .9-.3 1.700-.7 2.300c-.3-1.500-.8-2.700-1.700-3.600z" fill="#c8472b"/>
<path d="M30 2.300l5 3.900-2 5.300h-6l-2-5.300z" fill="#eaeaea" stroke="#969696" stroke-width="0.8" stroke-linejoin="round"/><path d="M27 13.600h6" stroke="#b0b0b0" stroke-width="1"/>
<rect x="47.900" y="5.900" width="7.300" height="7" fill="#787878"/><path d="M51.500 7v4.800M49.100 9.400h4.800" stroke="#eee" stroke-width="0.8"/><path d="M50.600 7.700l.9-.9.900.9M50.600 11.100l.9.900.9-.9M49.900 8.500l-.9.900.9.900M53.100 8.500l.9.900-.9.900" stroke="#eee" stroke-width="0.5" fill="none"/><path d="M47 3h8.500M47 2.200v1.600M55.500 2.200v1.600M45.500 5.500v8.500M44.800 5.500h1.400M44.800 14h1.400" stroke="#9a9a9a" stroke-width="0.6" fill="none"/>
</svg>
<div class="a" style="left:781px;top:163.800px;width:201px;height:1px;background:#c6c6c6"></div>
<svg class="a" style="left:786px;top:160px" width="10" height="5"><path d="M.8 4.300l3.300-3.500 3.300 3.500" fill="#d8d8d8" stroke="#c9c9c9" stroke-width="0.7"/></svg>
<svg class="a" style="left:785px;top:169px" width="6" height="6"><path d="M4.500 1v4h-4z" fill="#444"/></svg>
<div class="t" style="left:792.500px;top:168.5px;font-size:6.500px;color:#c8472b;font-weight:bold">填充</div>
<div class="ro" style="left:793px;top:185.5px"></div>
<div class="t" style="left:801.500px;top:184.8px;font-size:6.200px;color:#3c3c3c">无填充(<u>N</u>)</div>
<div class="ro" style="left:793px;top:198.2px"></div>
<div class="a" style="left:794.800px;top:200.0px;width:1.500px;height:1.500px;border-radius:50%;background:#333"></div>
<div class="t" style="left:801.500px;top:197.5px;font-size:6.200px;color:#3c3c3c">纯色填充(<u>S</u>)</div>
<div class="ro" style="left:793px;top:211.2px"></div>
<div class="t" style="left:801.500px;top:210.5px;font-size:6.200px;color:#3c3c3c">渐变填充(<u>G</u>)</div>
<div class="ro" style="left:793px;top:224.0px"></div>
<div class="t" style="left:801.500px;top:223.3px;font-size:6.200px;color:#3c3c3c">图片或纹理填充(<u>P</u>)</div>
<div class="ro" style="left:793px;top:236.9px"></div>
<div class="t" style="left:801.500px;top:236.20000000000002px;font-size:6.200px;color:#3c3c3c">图案填充(<u>A</u>)</div>
<div class="t" style="left:797.500px;top:255.500px;font-size:6.300px;color:#333">颜色(<u>C</u>)</div>
<div class="a" style="left:949.500px;top:252px;width:23px;height:13.500px;background:#e9e9e9;border:1px solid #c2c2c2;box-sizing:border-box"></div>
<svg class="a" style="left:950px;top:252px" width="23" height="14"><path d="M6 7l3-3 3 3-3 2.500z" fill="#fff" stroke="#666" stroke-width="0.7"/><path d="M12.500 6.500c.8.800.8 1.800 0 2.500" stroke="#2e6fb5" stroke-width="0.9" fill="none"/><path d="M5.500 10.800h8" stroke="#c9c9c9" stroke-width="1.200"/><path d="M16.500 6l1.500 1.800 1.500-1.800z" fill="#555"/></svg>
<div class="t" style="left:797.500px;top:271.800px;font-size:6.300px;color:#333">透明度(<u>T</u>)</div>
<div class="a" style="left:829px;top:272.500px;width:1px;height:5px;background:#444"></div><div class="a" style="left:830px;top:274.800px;width:85px;height:1px;background:#adadad"></div>
<div class="a" style="left:919.500px;top:269px;width:53px;height:13.500px;background:#ececec;border:1px solid #c2c2c2;box-sizing:border-box"></div>
<div class="t" style="left:923px;top:272.500px;font-size:6.800px;color:#555">0%</div>
<svg class="a" style="left:964px;top:270px" width="8" height="11"><path d="M2.500 4.500l1.500-2 1.500 2zM2.500 8l1.500 2 1.500-2z" fill="#555"/></svg>
<svg class="a" style="left:785px;top:292px" width="6" height="6"><path d="M4.500 1v4h-4z" fill="#444"/></svg>
<div class="t" style="left:792.500px;top:291.5px;font-size:6.500px;color:#c8472b;font-weight:bold">线条</div>
<div class="ro" style="left:793px;top:308.5px;border-color:#dedede;background:#e4e4e4"></div>
<div class="t" style="left:801.500px;top:307.8px;font-size:6.300px;color:#a9a9a9">无线条(<u>N</u>)</div>
<div class="ro" style="left:793px;top:321.5px;border-color:#dedede;background:#e4e4e4"></div>
<div class="t" style="left:801.500px;top:320.8px;font-size:6.300px;color:#a9a9a9">实线(<u>S</u>)</div>
<div class="ro" style="left:793px;top:334.2px;border-color:#dedede;background:#e4e4e4"></div>
<div class="t" style="left:801.500px;top:333.5px;font-size:6.300px;color:#a9a9a9">渐变线(<u>G</u>)</div>
<div class="a" id="status"></div><div class="a" style="left:0;top:554.500px;width:990px;height:1.500px;background:#1e1e1e"></div>
<div class="t" style="left:3px;top:546.700px;font-size:6.500px;color:#333">幻灯片 第 4 张，共 5 张</div>
<svg class="a" style="left:80px;top:545.500px" width="9" height="9"><rect x="1" y="1.500" width="4" height="5.500" fill="none" stroke="#666" stroke-width="0.7"/><path d="M6 2h2v5h-2" fill="none" stroke="#666" stroke-width="0.7"/></svg>
<div class="t" style="left:96px;top:546.700px;font-size:6.500px;color:#333">中文(中国)</div>
<svg class="a" style="left:775px;top:545px" width="9" height="9"><path d="M1 4.500h6M1 6.500h6M4 1.500l1.500 1.500h-3z" stroke="#555" stroke-width="0.7" fill="#555"/></svg>
<div class="t" style="left:785px;top:546.700px;font-size:6.500px;color:#222">备注</div>
<div class="a" style="left:808px;top:544.500px;width:19px;height:10px;background:#c6c6c6"></div>
<svg class="a" style="left:808px;top:544px" width="182" height="12" viewBox="808 0 182 12">
<g fill="none" stroke="#666" stroke-width="0.7"><rect x="813.500" y="3" width="8" height="6"/><path d="M816 3v6M816 5.500h5.500"/>
<rect x="833.500" y="3" width="2.500" height="2"/><rect x="838" y="3" width="2.500" height="2"/><rect x="833.500" y="7" width="2.500" height="2"/><rect x="838" y="7" width="2.500" height="2"/>
<path d="M853.500 3h2.500v5.500h-2.500zM857.500 3h2.500v5.500h-2.500zM856.700 3v6.500"/>
<rect x="872" y="3" width="7" height="3.500"/><path d="M875.500 6.500v2.500M873.500 9.300h4"/>
<path d="M982.500 3.500h2M982.500 3.500v2M989 3.500h-2M989 3.500v2M982.500 9.500h2M982.500 9.500v-2M989 9.500h-2M989 9.500v-2" transform="translate(-2.500 -0.500)"/></g>
<path d="M888.500 6h3M947 6h3.500M948.700 4.300v3.500" stroke="#444" stroke-width="0.9"/>
<path d="M894 6h50" stroke="#a9a9a9" stroke-width="0.8"/><path d="M919 5v2" stroke="#a9a9a9" stroke-width="0.7"/>
<rect x="912" y="3" width="2" height="6" fill="#555"/></svg>
<div class="t" style="left:957px;top:546.700px;font-size:6.500px;color:#333">75%</div>
<svg class="a" style="left:755px;top:15px" width="235" height="60" viewBox="755 15 235 60">
<defs><mask id="wm1" maskUnits="userSpaceOnUse" x="755" y="15" width="235" height="60"><rect x="755" y="15" width="235" height="60" fill="#fff"/><g fill="none" stroke="#000" stroke-linecap="round" stroke-linejoin="round"><path d="M760.500 28.800c1-1.800 3-2.300 4.800-1.300c2.200 1.200 3.200 3.500 3.200 6.500v20c0 6.500 4 11 11 11h41.500c5 0 8-3 8-8v-22c0-5-3-8-8-8h-36c-5 0-8 3-8 8v22c0 2.500 1 5 3 6.500M784.500 27l3.500-5.500 3.500 5.500M814.500 27l3.500-5.500 3.500 5.500" stroke-width="3.400"/><path d="M793 31.500h20M793 35.500h20M793 39.500h20M803 28v7.500M777 49.500h5.500M777 55h5.500M828.500 49.500h-5.500M828.500 55h-5.500" stroke-width="2.200"/><path d="M798 45.500v12l10.500-6z" stroke-width="1"/></g></mask></defs>
<g opacity=".5" mask="url(#wm1)" fill="none" stroke="#505050" stroke-linecap="round" stroke-linejoin="round"><path d="M760.500 28.800c1-1.800 3-2.300 4.800-1.300c2.200 1.200 3.200 3.500 3.200 6.500v20c0 6.500 4 11 11 11h41.500c5 0 8-3 8-8v-22c0-5-3-8-8-8h-36c-5 0-8 3-8 8v22c0 2.500 1 5 3 6.500M784.500 27l3.500-5.500 3.500 5.500M814.500 27l3.500-5.500 3.500 5.500" stroke-width="4.800"/><path d="M793 31.500h20M793 35.500h20M793 39.500h20M803 28v7.500M777 49.500h5.500M777 55h5.500M828.500 49.500h-5.500M828.500 55h-5.500" stroke-width="3.600"/><path d="M798 45.500v12l10.500-6z" stroke-width="2.400"/></g>
<g opacity=".45" fill="none" stroke="#fff" stroke-linecap="round" stroke-linejoin="round"><path d="M760.500 28.800c1-1.800 3-2.300 4.800-1.300c2.200 1.200 3.200 3.500 3.200 6.500v20c0 6.500 4 11 11 11h41.500c5 0 8-3 8-8v-22c0-5-3-8-8-8h-36c-5 0-8 3-8 8v22c0 2.500 1 5 3 6.500M784.500 27l3.500-5.500 3.500 5.500M814.500 27l3.500-5.500 3.500 5.500" stroke-width="4"/><path d="M793 31.500h20M793 35.500h20M793 39.500h20M803 28v7.500M777 49.500h5.500M777 55h5.500M828.500 49.500h-5.500M828.500 55h-5.500" stroke-width="2.800"/><path d="M798 45.500v12l10.500-6z" stroke-width="1.600"/></g>
<text x="829" y="62.500" font-family="Noto Sans CJK SC,sans-serif" font-weight="500" font-size="49" fill="rgba(255,255,255,.45)" stroke="rgba(70,70,70,.5)" stroke-width="1" stroke-linejoin="round" textLength="141" lengthAdjust="spacingAndGlyphs">虎课网</text>
</svg></body></html>
